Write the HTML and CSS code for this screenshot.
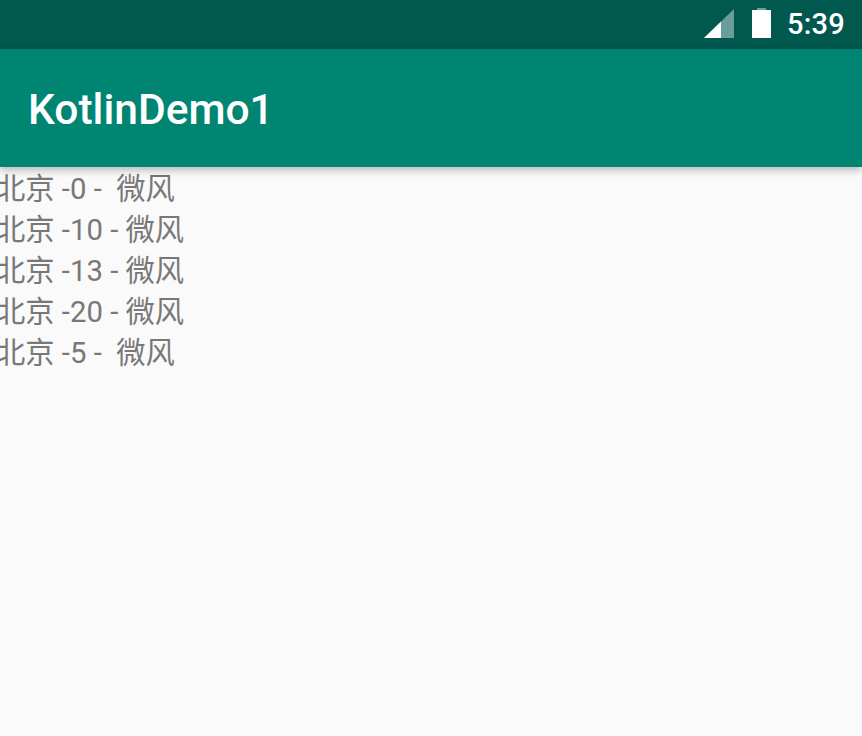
FILE: index.html
```html
<!DOCTYPE html>
<html lang="zh">
<head>
<meta charset="utf-8">
<title>KotlinDemo1</title>
<link rel="stylesheet" href="styles.css">
</head>
<body>
<header class="status-bar">
  <svg class="signal" width="30" height="30" viewBox="0 0 30 30">
    <polygon class="signal-dim" points="0,29 30,0 30,29"/>
    <polygon class="signal-on" points="0,29 17,12.5 17,29"/>
  </svg>
  <svg class="battery" width="19" height="30" viewBox="0 0 19 30">
    <path class="battery-cap" d="M5 0h9v2H5z"/>
    <path class="battery-body" d="M0 2h19v28H0z"/>
  </svg>
  <span class="clock">5:39</span>
</header>
<div class="app-bar"><h1 class="title">KotlinDemo1</h1></div>
<main class="list">
  <div class="row">北京 -0 -&nbsp; 微风</div>
  <div class="row">北京 -10 - 微风</div>
  <div class="row">北京 -13 - 微风</div>
  <div class="row">北京 -20 - 微风</div>
  <div class="row">北京 -5 -&nbsp; 微风</div>
</main>
</body>
</html>
```
FILE: styles.css
```css
* { box-sizing: border-box; }
html, body { margin: 0; height: 100%; }
body {
  width: 862px;
  height: 736px;
  overflow: hidden;
  background: #fafafa;
  font-family: Roboto, "Noto Sans CJK SC", sans-serif;
}
.status-bar {
  height: 49px;
  background: #00584e;
  display: flex;
  align-items: center;
  justify-content: flex-end;
  padding-right: 17px;
  color: #fff;
}
.signal { margin: 0 18px 1px 0; }
.signal-dim { fill: #fff; opacity: .42; }
.signal-on { fill: #fff; }
.battery { margin: 0 16px 3px 0; }
.battery-cap { fill: #fff; opacity: .42; }
.battery-body { fill: #fff; }
.clock { font-size: 29px; line-height: 49px; font-weight: 500; letter-spacing: .2px; }
.app-bar {
  height: 118px;
  background: #008573;
  display: flex;
  align-items: center;
  padding: 5px 0 0 28px;
  box-shadow: 0 3px 8px rgba(0,0,0,.28);
  position: relative;
}
.title { margin: 0; font-size: 42.5px; font-weight: 500; color: #fff; line-height: 1; }
.list { padding-top: 2px; margin-left: -4px; }
.row { height: 41px; line-height: 41px; font-size: 29.3px; color: #787878; white-space: nowrap; }
```
